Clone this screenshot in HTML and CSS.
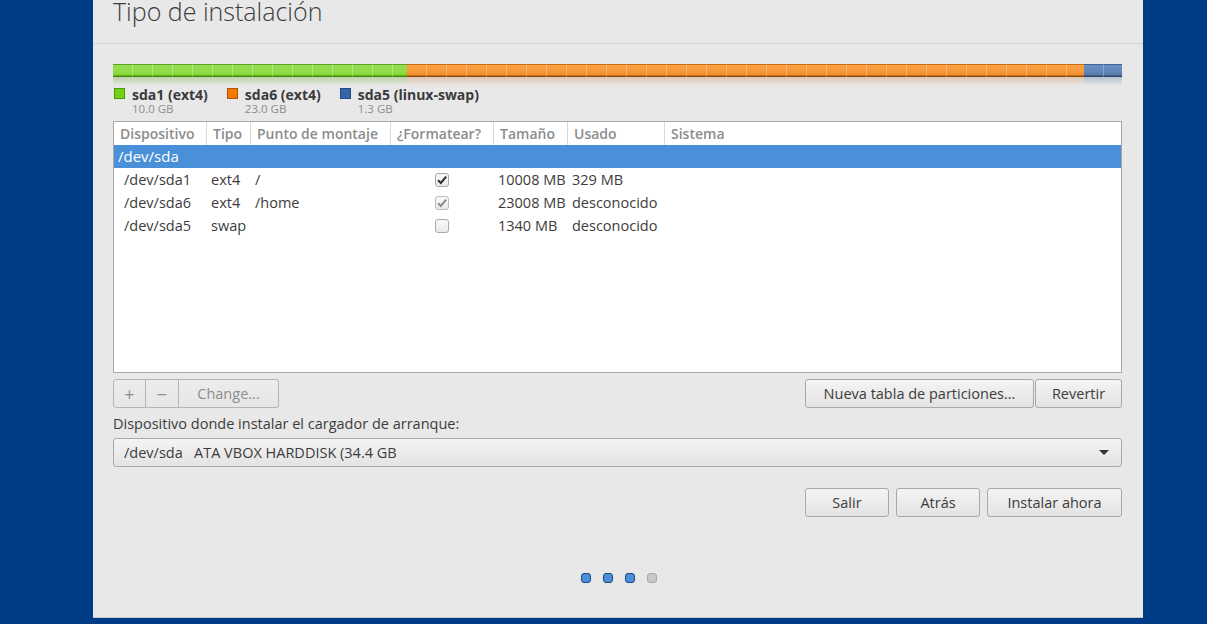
FILE: index.html
```html
<!DOCTYPE html>
<html lang="es">
<head>
<meta charset="utf-8">
<title>Tipo de instalación</title>
<link rel="stylesheet" href="styles.css">
</head>
<body>
<div class="window">
  <div class="header"><h1 class="title">Tipo de instalación</h1></div>
  <div class="content">
    <div class="bar">
      <div class="seg seg-green" style="width:294px"></div>
      <div class="seg seg-orange" style="width:677px"></div>
      <div class="seg seg-blue" style="width:38px"></div>
    </div>
    <div class="legend">
      <div class="leg-item">
        <span class="sq sq-green"></span>
        <div class="leg-text"><div class="leg-name">sda1 (ext4)</div><div class="leg-size">10.0 GB</div></div>
      </div>
      <div class="leg-item">
        <span class="sq sq-orange"></span>
        <div class="leg-text"><div class="leg-name">sda6 (ext4)</div><div class="leg-size">23.0 GB</div></div>
      </div>
      <div class="leg-item">
        <span class="sq sq-blue"></span>
        <div class="leg-text"><div class="leg-name">sda5 (linux-swap)</div><div class="leg-size">1.3 GB</div></div>
      </div>
    </div>

    <div class="table">
      <div class="row head">
        <div class="c">Dispositivo</div>
        <div class="c">Tipo</div>
        <div class="c">Punto de montaje</div>
        <div class="c">¿Formatear?</div>
        <div class="c">Tamaño</div>
        <div class="c">Usado</div>
        <div class="c">Sistema</div>
      </div>
      <div class="row sel"><div class="c">/dev/sda</div></div>
      <div class="row data">
        <div class="c dev">/dev/sda1</div>
        <div class="c">ext4</div>
        <div class="c">/</div>
        <div class="c chk"><span class="cb on"><svg viewBox="0 0 14 14" width="14" height="14"><path d="M3 7.2 L5.8 10 L11.2 3.6" fill="none" stroke="#2e2e2e" stroke-width="2"/></svg></span></div>
        <div class="c">10008 MB</div>
        <div class="c">329 MB</div>
        <div class="c"></div>
      </div>
      <div class="row data">
        <div class="c dev">/dev/sda6</div>
        <div class="c">ext4</div>
        <div class="c">/home</div>
        <div class="c chk"><span class="cb dim"><svg viewBox="0 0 14 14" width="14" height="14"><path d="M3 7.2 L5.8 10 L11.2 3.6" fill="none" stroke="#8c8c8c" stroke-width="2"/></svg></span></div>
        <div class="c">23008 MB</div>
        <div class="c">desconocido</div>
        <div class="c"></div>
      </div>
      <div class="row data">
        <div class="c dev">/dev/sda5</div>
        <div class="c">swap</div>
        <div class="c"></div>
        <div class="c chk"><span class="cb"></span></div>
        <div class="c">1340 MB</div>
        <div class="c">desconocido</div>
        <div class="c"></div>
      </div>
    </div>

    <div class="toolrow">
      <div class="group">
        <button class="btn ins sm">+</button>
        <button class="btn ins sm">−</button>
        <button class="btn ins change">Change...</button>
      </div>
      <div class="group right">
        <button class="btn nueva">Nueva tabla de particiones...</button>
        <button class="btn revertir">Revertir</button>
      </div>
    </div>

    <div class="label">Dispositivo donde instalar el cargador de arranque:</div>
    <div class="combo">
      <span>/dev/sda&nbsp;&nbsp;&nbsp;ATA VBOX HARDDISK (34.4 GB</span>
      <svg class="arrow" width="10" height="6" viewBox="0 0 10 6"><path d="M0 0 H10 L5 5 Z" fill="#333"/></svg>
    </div>

    <div class="actions">
      <button class="btn act salir">Salir</button>
      <button class="btn act atras">Atrás</button>
      <button class="btn act instalar">Instalar ahora</button>
    </div>

    <div class="dots">
      <span class="dot done"></span>
      <span class="dot done"></span>
      <span class="dot done"></span>
      <span class="dot"></span>
    </div>
  </div>
</div>
</body>
</html>
```

FILE: styles.css
```css
* { box-sizing: border-box; }
html, body { margin: 0; padding: 0; }
body {
  background: #003b86;
  height: 624px;
  overflow: hidden;
  font-family: "Open Sans", "Noto Sans", sans-serif;
  font-size: 14.5px;
  color: #3c3c3c;
}
.window {
  margin-left: 93px;
  width: 1050px;
  height: 618px;
  background: #e8e8e8;
  border-bottom: 1px solid #c9c9c9;
}
.header {
  height: 44px;
  border-bottom: 1px solid #d2d2d2;
  padding-left: 20px;
}
.title {
  margin: 0;
  font-size: 25px;
  font-weight: 300;
  line-height: 22px;
  color: #3c3c3c;
}
.content {
  padding: 20px 21px 0 20px;
}
.bar {
  display: flex;
  height: 13px;
}
.seg {
  position: relative;
  height: 13px;
}
.seg::after {
  content: "";
  position: absolute;
  left: 0; right: 0; top: 13px;
  height: 9px;
}
.seg-green {
  background:
    repeating-linear-gradient(to right, transparent 0 19px, rgba(255,255,255,0.28) 19px 20px),
    linear-gradient(#5aa51c 0, #5aa51c 1px, #97dc55 1px, #8fdd45 8px, #82d232 11px, #4c8f0e 12px, #3f7a08 13px);
}
.seg-green::after { background: linear-gradient(rgba(100,170,40,0.35), rgba(120,190,60,0)); }
.seg-orange {
  background:
    repeating-linear-gradient(to right, transparent 0 19px, rgba(255,255,255,0.25) 19px 20px),
    linear-gradient(#cf6c12 0, #cf6c12 1px, #fba246 1px, #f8983a 8px, #ee8a2c 11px, #9a520f 12px, #7e420a 13px);
}
.seg-orange::after { background: linear-gradient(rgba(200,120,50,0.3), rgba(220,150,80,0)); }
.seg-blue {
  background:
    repeating-linear-gradient(to right, transparent 0 19px, rgba(255,255,255,0.25) 19px 20px),
    linear-gradient(#3f6596 0, #3f6596 1px, #6a8fc0 1px, #5f86b9 8px, #56799f 11px, #2f4d74 12px, #243e60 13px);
}
.seg-blue::after { background: linear-gradient(rgba(70,100,150,0.3), rgba(90,120,170,0)); }

.legend {
  display: flex;
  margin-top: 9px;
  padding-left: 1px;
  gap: 19px;
}
.leg-item {
  display: flex;
  gap: 7px;
}
.sq {
  width: 11px;
  height: 11px;
  margin-top: 2px;
  border: 1px solid;
}
.sq-green { background: #73d216; border-color: #4e9a06; }
.sq-orange { background: #f57900; border-color: #ae5400; }
.sq-blue { background: #3465a4; border-color: #204a87; }
.leg-name {
  font-weight: 700;
  font-size: 14px;
  line-height: 17px;
  color: #3a3a3a;
}
.leg-size {
  font-size: 11.5px;
  line-height: 14px;
  color: #8e8e8e;
  margin-top: -1px;
}

.table {
  margin-top: 5px;
  height: 252px;
  background: #fff;
  border: 1px solid #a8a8a8;
}
.row {
  display: grid;
  grid-template-columns: 92px 44px 140px 103px 74px 97px 1fr;
  height: 23px;
  align-items: center;
}
.head .c {
  font-weight: 600;
  font-size: 14px;
  color: #8c8c8c;
  padding-left: 6px;
  height: 23px;
  line-height: 23px;
  white-space: nowrap;
  overflow: hidden;
}
.head .c + .c { border-left: 1px solid #dadada; }
.sel {
  display: block;
  background: #4a90d9;
  color: #fff;
  font-size: 15px;
  line-height: 23px;
  padding-left: 4px;
}
.data .c {
  padding-left: 5px;
  white-space: nowrap;
  font-size: 14.5px;
}
.data .c.dev { padding-left: 10px; }
.data .c.chk { padding-left: 0; display: flex; justify-content: center; }
.cb {
  display: block;
  width: 14px;
  height: 14px;
  border: 1px solid #a9a9a9;
  border-radius: 3px;
  background: linear-gradient(#fafafa, #e9e9e9);
}
.cb svg { display: block; margin: -1px 0 0 -1px; }
.cb.dim { border-color: #bdbdbd; }

.toolrow {
  display: flex;
  justify-content: space-between;
  margin-top: 6px;
}
.group { display: flex; }
.btn {
  font-family: inherit;
  font-size: 14.5px;
  color: #3c3c3c;
  height: 29px;
  padding: 0;
  border: 1px solid #a9a9a9;
  border-radius: 3px;
  background: linear-gradient(#f4f4f4, #e3e3e3);
}
.btn.ins { color: #8e8e8e; border-color: #b5b5b5; background: linear-gradient(#ececec, #e6e6e6); }
.group .btn { border-radius: 0; }
.group .btn:first-child { border-top-left-radius: 3px; border-bottom-left-radius: 3px; }
.group .btn:last-child { border-top-right-radius: 3px; border-bottom-right-radius: 3px; }
.group .btn + .btn { border-left: none; }
.btn.sm { width: 33px; font-size: 18px; line-height: 1; }
.btn.change { width: 100px; }
.right .btn.nueva { width: 229px; border-radius: 3px; }
.right .btn.revertir { width: 87px; border-left: 1px solid #a9a9a9; margin-left: 1px; border-radius: 3px; }

.label {
  margin-top: 7px;
  line-height: 18px;
}
.combo {
  margin-top: 5px;
  height: 29px;
  border: 1px solid #a9a9a9;
  border-radius: 3px;
  background: linear-gradient(#f4f4f4, #e3e3e3);
  display: flex;
  align-items: center;
  justify-content: space-between;
  padding: 0 12px 0 10px;
  white-space: pre;
}
.arrow { display: block; }

.actions {
  display: flex;
  justify-content: flex-end;
  gap: 7px;
  margin-top: 21px;
}
.btn.act { width: 84px; }
.btn.instalar { width: 135px; }

.dots {
  display: flex;
  justify-content: center;
  gap: 12px;
  margin-top: 56px;
  padding-left: 2px;
}
.dot {
  width: 10px;
  height: 10px;
  border-radius: 3px;
  background: #c8c8c8;
  border: 1px solid #a8a8a8;
}
.dot.done { background: #4a8fd8; border-color: #1f4b85; }
```
